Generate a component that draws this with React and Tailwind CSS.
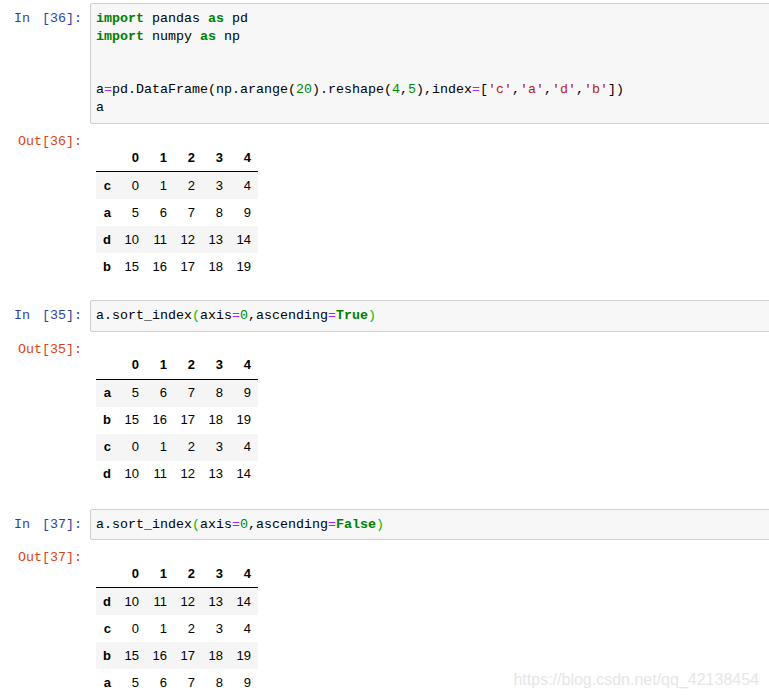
import React from "react";

const K = ({ children }) => <span className="font-bold text-[#008000]">{children}</span>;
const O = ({ children }) => <span className="text-[#aa22ff]">{children}</span>;
const N = ({ children }) => <span className="text-[#008800]">{children}</span>;
const S = ({ children }) => <span className="text-[#ba2121]">{children}</span>;
const B = ({ children }) => <span className="text-[#00bb00]">{children}</span>;

const mono = "font-['Liberation_Mono','DejaVu_Sans_Mono',monospace] text-[13.33px] leading-[17.8px]";

function InCell({ n, lines }) {
  return (
    <div className="flex">
      <div className={`w-[90px] shrink-0 pr-[8px] pt-[7px] text-right text-[#303f9f] whitespace-pre ${mono}`}>
        <span>In</span>
        <span className="inline-block w-[12px]"></span>
        <span>[{n}]:</span>
      </div>
      <div className={`flex-1 mr-[-8px] border border-[#cfcfcf] bg-[#f7f7f7] rounded-[2px] pl-[5px] py-[6px] text-black whitespace-pre ${mono}`}>
        {lines.map((l, i) => (
          <div key={i} className="h-[17.8px]">{l}</div>
        ))}
      </div>
    </div>
  );
}

function OutCell({ n, rows, mb }) {
  return (
    <div className={`flex pt-[7px] ${mb}`}>
      <div className={`w-[90px] shrink-0 pr-[8px] pt-[2px] text-right text-[#d84315] whitespace-pre ${mono}`}>Out[{n}]:</div>
      <div className="mt-[13px] ml-[6px] text-[13px] text-black font-['Liberation_Sans',Arial,sans-serif]">
        <div className="flex h-[28px] items-center border-b border-black font-bold">
          <div className="w-[22px]"></div>
          {[0, 1, 2, 3, 4].map((c) => (
            <div key={c} className="w-[28px] pr-[7px] text-right">{c}</div>
          ))}
        </div>
        {rows.map(([idx, vals], i) => (
          <div key={idx} className={`flex h-[27px] items-center ${i % 2 === 0 ? "bg-[#f5f5f5]" : "bg-white"}`}>
            <div className="w-[22px] pr-[7px] text-right font-bold">{idx}</div>
            {vals.map((v, j) => (
              <div key={j} className="w-[28px] pr-[7px] text-right">{v}</div>
            ))}
          </div>
        ))}
      </div>
    </div>
  );
}

const R = {
  c: ["c", [0, 1, 2, 3, 4]],
  a: ["a", [5, 6, 7, 8, 9]],
  d: ["d", [10, 11, 12, 13, 14]],
  b: ["b", [15, 16, 17, 18, 19]],
};

export default function App() {
  return (
    <div className="relative w-[769px] h-[698px] overflow-hidden bg-white font-['Liberation_Sans',Arial,sans-serif]">
      <div className="pt-[3px]">
        <InCell
          n="36"
          lines={[
            <><K>import</K> pandas <K>as</K> pd</>,
            <><K>import</K> numpy <K>as</K> np</>,
            "",
            "",
            <>a<O>=</O>pd.DataFrame(np.arange(<N>20</N>).reshape(<N>4</N>,<N>5</N>),index<O>=</O>[<S>'c'</S>,<S>'a'</S>,<S>'d'</S>,<S>'b'</S>])</>,
            "a",
          ]}
        />
        <OutCell n="36" rows={[R.c, R.a, R.d, R.b]} mb="mb-[20px]" />
        <InCell
          n="35"
          lines={[
            <>a.sort_index<B>(</B>axis<O>=</O><N>0</N>,ascending<O>=</O><K>True</K><B>)</B></>,
          ]}
        />
        <OutCell n="35" rows={[R.a, R.b, R.c, R.d]} mb="mb-[21px]" />
        <InCell
          n="37"
          lines={[
            <>a.sort_index<B>(</B>axis<O>=</O><N>0</N>,ascending<O>=</O><K>False</K><B>)</B></>,
          ]}
        />
        <OutCell n="37" rows={[R.d, R.c, R.b, R.a]} mb="" />
      </div>
      <div className="absolute right-[10px] top-[671px] text-[16px] leading-[18px] text-[#e6e6e6] font-['Liberation_Sans',Arial,sans-serif]">
        https://blog.csdn.net/qq_42138454
      </div>
    </div>
  );
}
